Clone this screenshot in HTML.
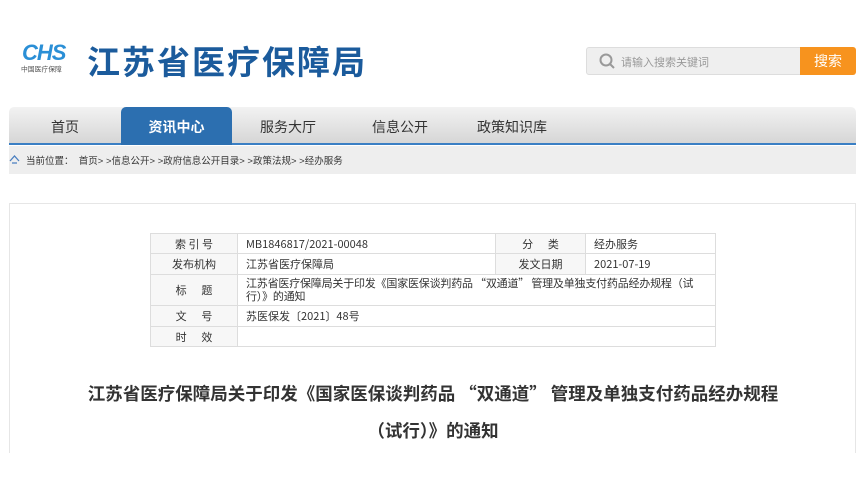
<!DOCTYPE html>
<html><head><meta charset="utf-8"><style>
*{margin:0;padding:0;box-sizing:border-box}
body{width:866px;height:482px;background:#fff;font-family:"Liberation Sans","Noto Sans CJK SC",sans-serif;position:relative;overflow:hidden;color:#333}
.abs{position:absolute}
.cjk{font-family:"Noto Sans CJK SC",sans-serif}
td{border:1px solid #ddd;font-size:11px;padding:0 8px;color:#333;font-family:"Noto Sans CJK SC",sans-serif}
td.l{text-align:center;background:#f7f7f7}
</style></head><body>
<div class="abs" style="left:22px;top:40px;font:italic bold 22px 'Liberation Sans';color:#2a8fd6;letter-spacing:-1px">CHS</div>
<div class="abs" style="left:21px;top:64px;font-size:8px;color:#555;white-space:nowrap;transform:scale(.85);transform-origin:left">中国医疗保障</div>
<div class="abs cjk" style="left:87px;top:36px;font-size:33px;font-weight:bold;color:#1b5b9c;letter-spacing:2px">江苏省医疗保障局</div>
<div class="abs" style="left:586px;top:47px;width:215px;height:28px;background:#efefef;border:1px solid #ddd;border-radius:3px 0 0 3px"></div>
<svg class="abs" style="left:599px;top:53px" width="16" height="16"><circle cx="7" cy="7" r="5.5" fill="none" stroke="#999" stroke-width="2"/><line x1="11" y1="11" x2="15" y2="15" stroke="#999" stroke-width="2"/></svg>
<div class="abs" style="left:621px;top:54px;font-size:11px;color:#999">请输入搜索关键词</div>
<div class="abs" style="left:800px;top:47px;width:56px;height:28px;background:#f7931e;color:#fff;font-size:14px;text-align:center;line-height:28px;border-radius:0 3px 3px 0">搜索</div>
<div class="abs" style="left:9px;top:107px;width:847px;height:38px;background:linear-gradient(#f2f2f2,#d6d6d6);border-radius:5px 5px 0 0;border-bottom:2px solid #3a7fc4"></div>
<div class="abs" style="left:9px;top:107px;width:112px;height:38px;line-height:40px;text-align:center;font-size:14px;color:#333">首页</div>
<div class="abs" style="left:121px;top:107px;width:111px;height:38px;line-height:40px;text-align:center;font-size:14px;color:#fff;background:#2c6fb0;border-radius:5px 5px 0 0;font-weight:bold">资讯中心</div>
<div class="abs" style="left:232px;top:107px;width:112px;height:38px;line-height:40px;text-align:center;font-size:14px;color:#333">服务大厅</div>
<div class="abs" style="left:344px;top:107px;width:112px;height:38px;line-height:40px;text-align:center;font-size:14px;color:#333">信息公开</div>
<div class="abs" style="left:456px;top:107px;width:112px;height:38px;line-height:40px;text-align:center;font-size:14px;color:#333">政策知识库</div>
<div class="abs" style="left:9px;top:146px;width:847px;height:28px;background:#eee"></div>
<svg class="abs" style="left:9px;top:155px" width="11" height="9"><path d="M1 6 L5.5 1 L10 6 M3 8 H8" fill="none" stroke="#4a7fc0" stroke-width="1.3"/></svg>
<div class="abs" style="left:26px;top:153px;font-size:9.5px;color:#333;white-space:nowrap">当前位置：&nbsp; 首页&gt; &gt;信息公开&gt; &gt;政府信息公开目录&gt; &gt;政策法规&gt; &gt;经办服务</div>
<div class="abs" style="left:9px;top:203px;width:847px;height:250px;border:1px solid #e6e6e6;border-bottom:none"></div>
<table class="abs" style="left:150px;top:233px;width:566px;border-collapse:collapse">
<tr style="height:20px"><td class="l" style="width:87px">索 引 号</td><td style="width:258px">MB1846817/2021-00048</td><td class="l" style="width:90px">分&nbsp;&nbsp;&nbsp;&nbsp;&nbsp;&nbsp;类</td><td>经办服务</td></tr>
<tr style="height:21px"><td class="l">发布机构</td><td>江苏省医疗保障局</td><td class="l">发文日期</td><td>2021-07-19</td></tr>
<tr style="height:31px"><td class="l">标&nbsp;&nbsp;&nbsp;&nbsp;&nbsp;&nbsp;题</td><td colspan="3" style="line-height:13px;padding-right:4px;letter-spacing:-0.2px">江苏省医疗保障局关于印发《国家医保谈判药品 “双通道” 管理及单独支付药品经办规程（试<br>行）》的通知</td></tr>
<tr style="height:21px"><td class="l">文&nbsp;&nbsp;&nbsp;&nbsp;&nbsp;&nbsp;号</td><td colspan="3">苏医保发〔2021〕48号</td></tr>
<tr style="height:20px"><td class="l">时&nbsp;&nbsp;&nbsp;&nbsp;&nbsp;&nbsp;效</td><td colspan="3"></td></tr>
</table>
<div class="abs cjk" style="left:0;width:866px;top:375px;text-align:center;font-size:17.5px;font-weight:bold;color:#333;line-height:37px">江苏省医疗保障局关于印发《国家医保谈判药品 “双通道” 管理及单独支付药品经办规程<br>（试行）》的通知</div>
</body></html>
